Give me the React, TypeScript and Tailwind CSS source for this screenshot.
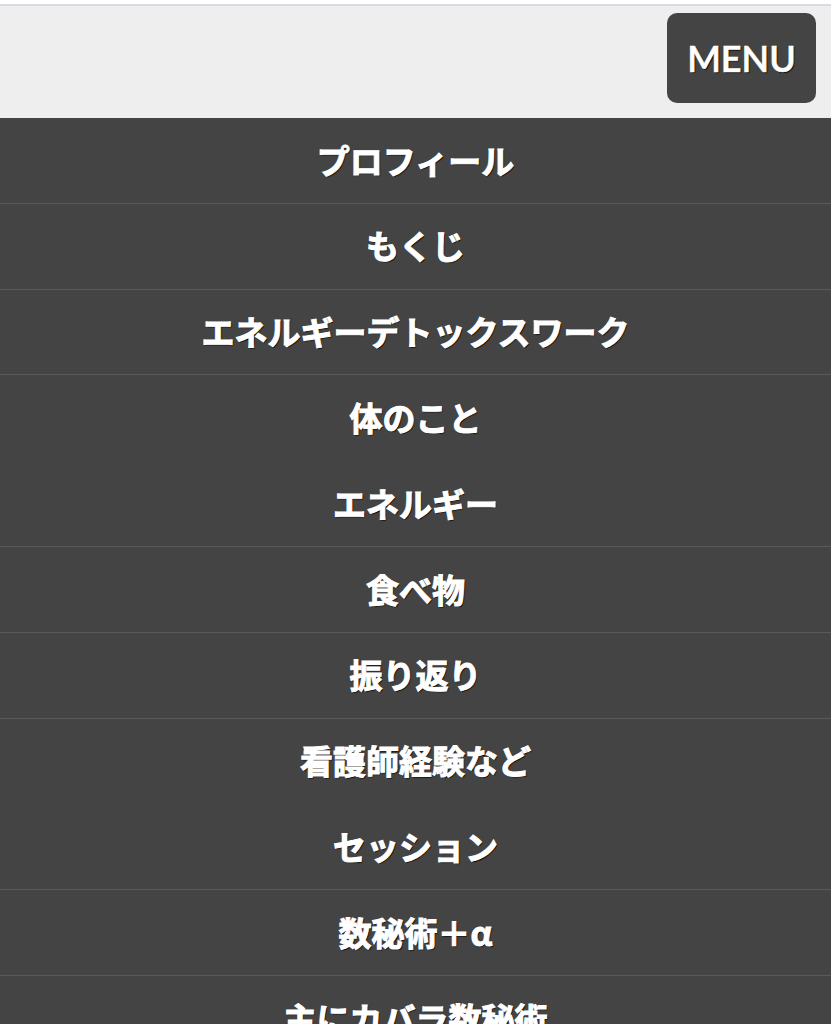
const items: { label: string; divider: boolean }[] = [
  { label: 'プロフィール', divider: true },
  { label: 'もくじ', divider: true },
  { label: 'エネルギーデトックスワーク', divider: true },
  { label: '体のこと', divider: false },
  { label: 'エネルギー', divider: true },
  { label: '食べ物', divider: true },
  { label: '振り返り', divider: true },
  { label: '看護師経験など', divider: false },
  { label: 'セッション', divider: true },
  { label: '数秘術＋α', divider: true },
  { label: '主にカバラ数秘術', divider: true },
];

export default function App() {
  return (
    <div className="w-[831px] bg-white">
      <div className="h-[4px] bg-white" />

      {/* Header */}
      <header className="flex h-[114px] justify-end border-t-2 border-[#d8dbe1] bg-[#eeeeee] pt-[7px] pr-[15px]">
        <button className="flex h-[90px] w-[149px] items-center justify-center rounded-[10px] bg-[#444444] font-['Lato','Open_Sans',sans-serif] text-[36px] font-semibold text-white [text-shadow:1px_1px_1px_#000] [-webkit-text-stroke:0.6px_white]">
          MENU
        </button>
      </header>

      {/* Menu list */}
      <nav className="bg-[#444444] font-['Noto_Sans_CJK_JP','Noto_Sans',sans-serif]">
        {items.map((item) => (
          <a
            key={item.label}
            href="#"
            className={
              item.divider
                ? 'flex h-[85.8px] items-center justify-center border-b border-[#5a5a5a] text-[33px] font-bold text-white [text-shadow:1px_1px_1px_#000] [-webkit-text-stroke:1px_white]'
                : 'flex h-[85.8px] items-center justify-center border-b border-[#444444] text-[33px] font-bold text-white [text-shadow:1px_1px_1px_#000] [-webkit-text-stroke:1px_white]'
            }
          >
            {item.label}
          </a>
        ))}
      </nav>
    </div>
  );
}
